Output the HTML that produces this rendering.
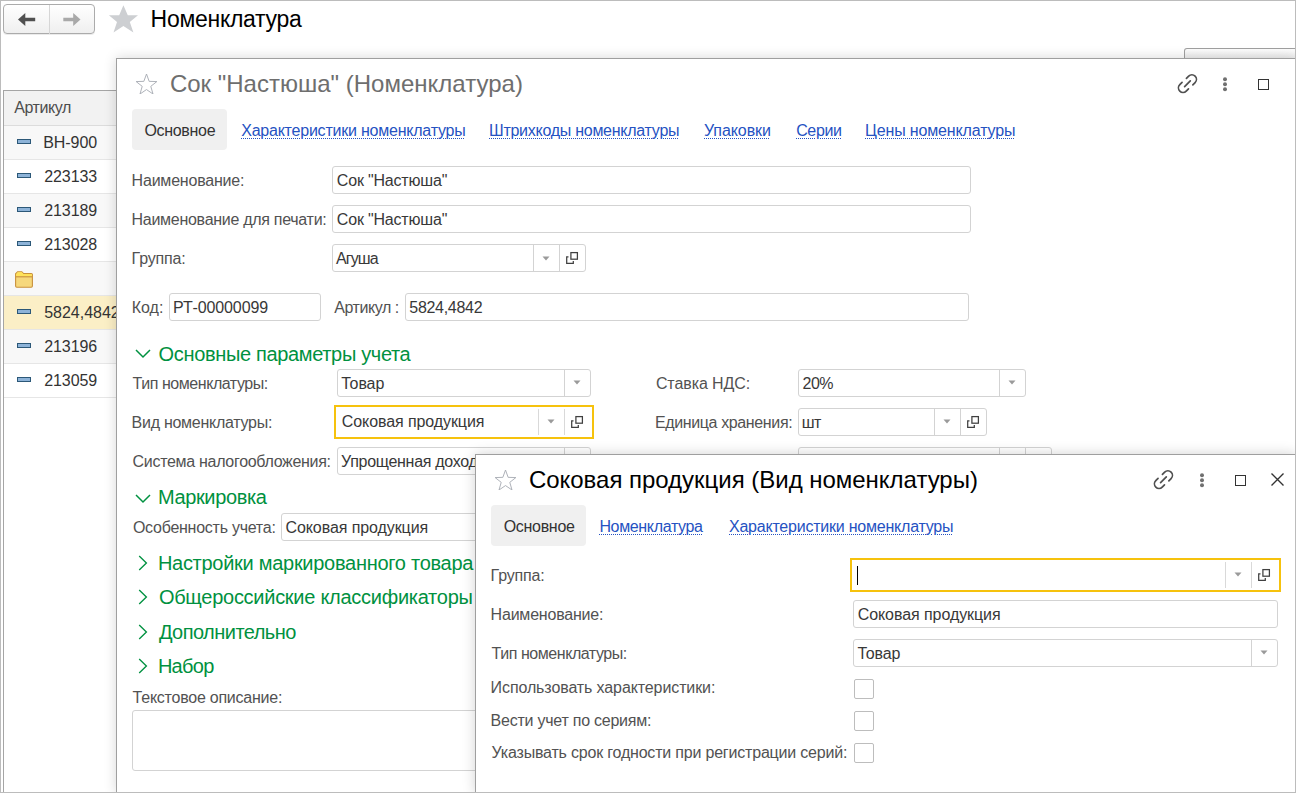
<!DOCTYPE html>
<html><head><meta charset="utf-8"><style>
html,body{margin:0;padding:0;background:#fff;}
body{width:1296px;height:793px;position:relative;overflow:hidden;font-family:"Liberation Sans", sans-serif;}
.lnk{text-decoration:underline dotted;text-decoration-thickness:1px;text-underline-offset:2px;}
</style></head><body>
<div style="position:absolute;left:3px;top:4px;width:92px;height:30px;box-sizing:border-box;border:1px solid #ababab;border-radius:4px;background:linear-gradient(#ffffff,#efefef);box-shadow:0 1px 0 rgba(0,0,0,0.08)"></div>
<div style="position:absolute;left:49px;top:5px;width:1px;height:29px;box-sizing:border-box;background:#d6d6d6"></div>
<svg width="20" height="16" style="position:absolute;left:17px;top:12px" viewBox="0 0 20 16"><path d="M1 7.5L8.3 1V5.8H18.2V9.2H8.3V14Z" fill="#505050"/></svg>
<svg width="20" height="16" style="position:absolute;left:62px;top:12px" viewBox="0 0 20 16"><path d="M18.5 7.5L11.2 1V5.8H1.3V9.2H11.2V14Z" fill="#a9a9a9"/></svg>
<svg width="40" height="35" style="position:absolute;left:104px;top:2px" viewBox="0 0 40 35"><path d="M19.4 3.3L23.8 13.2H34L25.8 20.1L29.4 30.5L19.4 24.1L9.5 30.5L13 20.1L4.9 13.2H15.2Z" fill="#cdcfd2"/></svg>
<div style="position:absolute;white-space:pre;left:150.60px;top:5.00px;font-size:23px;line-height:29px;color:#000;letter-spacing:-0.278px">Номенклатура</div>
<div style="position:absolute;left:3px;top:90px;width:1px;height:703px;box-sizing:border-box;background:#a5a5a5"></div>
<div style="position:absolute;left:3px;top:90px;width:1288px;height:1px;box-sizing:border-box;background:#a5a5a5"></div>
<div style="position:absolute;left:4px;top:91px;width:1287px;height:34px;box-sizing:border-box;background:#f2f2f2"></div>
<div style="position:absolute;left:4px;top:125px;width:1287px;height:1px;box-sizing:border-box;background:#dcdcdc"></div>
<div style="position:absolute;white-space:pre;left:14.30px;top:98.00px;font-size:16px;line-height:20px;color:#4d4d4d;letter-spacing:-0.452px">Артикул</div>
<div style="position:absolute;left:4px;top:126px;width:1287px;height:33px;box-sizing:border-box;background:#f8f8f8"></div>
<div style="position:absolute;left:4px;top:159px;width:1287px;height:1px;box-sizing:border-box;background:#e6e6e6"></div>
<div style="position:absolute;left:17px;top:139px;width:14px;height:5px;box-sizing:border-box;background:#8db3d8;border:1.2px solid #2c5878"></div>
<div style="position:absolute;white-space:pre;left:43.20px;top:133.00px;font-size:16px;line-height:20px;color:#333;letter-spacing:-0.050px">BH-900</div>
<div style="position:absolute;left:4px;top:160px;width:1287px;height:33px;box-sizing:border-box;background:#ffffff"></div>
<div style="position:absolute;left:4px;top:193px;width:1287px;height:1px;box-sizing:border-box;background:#e6e6e6"></div>
<div style="position:absolute;left:17px;top:173px;width:14px;height:5px;box-sizing:border-box;background:#8db3d8;border:1.2px solid #2c5878"></div>
<div style="position:absolute;white-space:pre;left:44.20px;top:167.00px;font-size:16px;line-height:20px;color:#333;letter-spacing:-0.078px">223133</div>
<div style="position:absolute;left:4px;top:194px;width:1287px;height:33px;box-sizing:border-box;background:#f8f8f8"></div>
<div style="position:absolute;left:4px;top:227px;width:1287px;height:1px;box-sizing:border-box;background:#e6e6e6"></div>
<div style="position:absolute;left:17px;top:207px;width:14px;height:5px;box-sizing:border-box;background:#8db3d8;border:1.2px solid #2c5878"></div>
<div style="position:absolute;white-space:pre;left:44.20px;top:201.00px;font-size:16px;line-height:20px;color:#333;letter-spacing:-0.078px">213189</div>
<div style="position:absolute;left:4px;top:228px;width:1287px;height:33px;box-sizing:border-box;background:#ffffff"></div>
<div style="position:absolute;left:4px;top:261px;width:1287px;height:1px;box-sizing:border-box;background:#e6e6e6"></div>
<div style="position:absolute;left:17px;top:241px;width:14px;height:5px;box-sizing:border-box;background:#8db3d8;border:1.2px solid #2c5878"></div>
<div style="position:absolute;white-space:pre;left:44.20px;top:235.00px;font-size:16px;line-height:20px;color:#333;letter-spacing:-0.078px">213028</div>
<div style="position:absolute;left:4px;top:262px;width:1287px;height:33px;box-sizing:border-box;background:#f8f8f8"></div>
<div style="position:absolute;left:4px;top:295px;width:1287px;height:1px;box-sizing:border-box;background:#e6e6e6"></div>
<svg width="19" height="17" style="position:absolute;left:15px;top:271px" viewBox="0 0 19 17"><path d="M0.6 3V15Q0.6 16.2 1.8 16.2H16.2Q17.4 16.2 17.4 15V3.6Q17.4 2.6 16.4 2.6H8.6L6.8 0.7H2.6L0.6 2.8Z" fill="#f6d87c" stroke="#c9913c" stroke-width="1.1"/><path d="M1.1 3.2H8.5L6.9 1.2H2.7Z" fill="#ffe35a"/><rect x="1.1" y="3.1" width="15.8" height="2.3" fill="#ffe35a"/><path d="M0.8 5.8H17.2" stroke="#c9913c" stroke-width="1.1"/></svg>
<div style="position:absolute;left:4px;top:296px;width:1287px;height:33px;box-sizing:border-box;background:#fbefc6"></div>
<div style="position:absolute;left:4px;top:329px;width:1287px;height:1px;box-sizing:border-box;background:#e6e6e6"></div>
<div style="position:absolute;left:17px;top:309px;width:14px;height:5px;box-sizing:border-box;background:#8db3d8;border:1.2px solid #2c5878"></div>
<div style="position:absolute;white-space:pre;left:44.20px;top:303.00px;font-size:16px;line-height:20px;color:#333;letter-spacing:-0.017px">5824,4842</div>
<div style="position:absolute;left:4px;top:330px;width:1287px;height:33px;box-sizing:border-box;background:#f8f8f8"></div>
<div style="position:absolute;left:4px;top:363px;width:1287px;height:1px;box-sizing:border-box;background:#e6e6e6"></div>
<div style="position:absolute;left:17px;top:343px;width:14px;height:5px;box-sizing:border-box;background:#8db3d8;border:1.2px solid #2c5878"></div>
<div style="position:absolute;white-space:pre;left:44.20px;top:337.00px;font-size:16px;line-height:20px;color:#333;letter-spacing:-0.078px">213196</div>
<div style="position:absolute;left:4px;top:364px;width:1287px;height:33px;box-sizing:border-box;background:#ffffff"></div>
<div style="position:absolute;left:4px;top:397px;width:1287px;height:1px;box-sizing:border-box;background:#e6e6e6"></div>
<div style="position:absolute;left:17px;top:377px;width:14px;height:5px;box-sizing:border-box;background:#8db3d8;border:1.2px solid #2c5878"></div>
<div style="position:absolute;white-space:pre;left:44.20px;top:371.00px;font-size:16px;line-height:20px;color:#333;letter-spacing:-0.078px">213059</div>
<div style="position:absolute;left:1184px;top:48px;width:112px;height:11px;box-sizing:border-box;border:1px solid #a0a0a0;border-bottom:none;border-radius:3px 0 0 0;background:linear-gradient(#fdfdfd,#ececec)"></div>
<div style="position:absolute;left:116px;top:58px;width:1180px;height:735px;box-sizing:border-box;border:1px solid #9f9f9f;background:#fff;box-shadow:0 0 12px rgba(0,0,0,0.16)"></div>
<svg width="23" height="20" style="position:absolute;left:135px;top:74px" viewBox="0 0 29 28"><path d="M14.5 0 L18.2 10.3 L29 10.6 L20.5 17.3 L23.6 28 L14.5 21.8 L5.4 28 L8.5 17.3 L0 10.6 L10.8 10.3Z" fill="none" stroke="#a4a9b0" stroke-width="1.25" stroke-linejoin="miter"/></svg>
<div style="position:absolute;white-space:pre;left:169.90px;top:68.60px;font-size:24px;line-height:30px;color:#6e6e6e;letter-spacing:0.004px">Сок &quot;Настюша&quot; (Номенклатура)</div>
<svg width="28" height="28" style="position:absolute;left:1174px;top:70px" viewBox="0 0 28 28"><g fill="none" stroke="#505050" stroke-width="1.6" stroke-linecap="round" transform="translate(13.45 13.6) scale(1.07) translate(-13.45 -13.35)"><path d="M12.5 8.5L14.6 6.4A4.2 4.2 0 0 1 20.6 12.4L18.5 14.5"/><path d="M14.4 18.2L12.3 20.3A4.2 4.2 0 0 1 6.3 14.3L8.4 12.2"/><path d="M10.8 16.1L16.1 10.8"/></g></svg>
<svg width="8" height="16" style="position:absolute;left:1221px;top:77px" viewBox="0 0 8 16"><circle cx="4" cy="2.2" r="2" fill="#707070"/><circle cx="4" cy="7.2" r="2" fill="#707070"/><circle cx="4" cy="12.2" r="2" fill="#707070"/></svg>
<div style="position:absolute;left:1258px;top:79px;width:11px;height:11px;box-sizing:border-box;border:1.3px solid #333"></div>
<div style="position:absolute;left:132px;top:109px;width:95px;height:41px;box-sizing:border-box;background:#f0f0f0;border-radius:4px"></div>
<div style="position:absolute;white-space:pre;left:144.40px;top:121.00px;font-size:16px;line-height:20px;color:#333;letter-spacing:-0.302px">Основное</div>
<div class="lnk" style="position:absolute;white-space:pre;left:241.20px;top:121.00px;font-size:16px;line-height:20px;color:#2552c2;letter-spacing:-0.224px">Характеристики номенклатуры</div>
<div class="lnk" style="position:absolute;white-space:pre;left:489.00px;top:121.00px;font-size:16px;line-height:20px;color:#2552c2;letter-spacing:-0.266px">Штрихкоды номенклатуры</div>
<div class="lnk" style="position:absolute;white-space:pre;left:704.00px;top:121.00px;font-size:16px;line-height:20px;color:#2552c2;letter-spacing:-0.084px">Упаковки</div>
<div class="lnk" style="position:absolute;white-space:pre;left:796.20px;top:121.00px;font-size:16px;line-height:20px;color:#2552c2;letter-spacing:-0.372px">Серии</div>
<div class="lnk" style="position:absolute;white-space:pre;left:865.00px;top:121.00px;font-size:16px;line-height:20px;color:#2552c2;letter-spacing:-0.142px">Цены номенклатуры</div>
<div style="position:absolute;white-space:pre;left:131.60px;top:171.30px;font-size:16px;line-height:20px;color:#525252;letter-spacing:-0.210px">Наименование:</div>
<div style="position:absolute;left:332px;top:166px;width:639px;height:28px;box-sizing:border-box;border:1px solid #d3d3d3;border-radius:3px;background:#fff"></div>
<div style="position:absolute;white-space:pre;left:336.80px;top:171.00px;font-size:16px;line-height:20px;color:#383838;letter-spacing:-0.183px">Сок &quot;Настюша&quot;</div>
<div style="position:absolute;white-space:pre;left:131.60px;top:210.30px;font-size:16px;line-height:20px;color:#525252;letter-spacing:-0.288px">Наименование для печати:</div>
<div style="position:absolute;left:332px;top:205px;width:639px;height:28px;box-sizing:border-box;border:1px solid #d3d3d3;border-radius:3px;background:#fff"></div>
<div style="position:absolute;white-space:pre;left:336.80px;top:210.00px;font-size:16px;line-height:20px;color:#383838;letter-spacing:-0.183px">Сок &quot;Настюша&quot;</div>
<div style="position:absolute;white-space:pre;left:131.60px;top:249.30px;font-size:16px;line-height:20px;color:#525252;letter-spacing:-0.168px">Группа:</div>
<div style="position:absolute;left:332px;top:244px;width:254px;height:28px;box-sizing:border-box;border:1px solid #d3d3d3;border-radius:3px;background:#fff"></div><div style="position:absolute;left:533px;top:245px;width:1px;height:26px;box-sizing:border-box;background:#d3d3d3"></div><div style="position:absolute;left:559px;top:245px;width:1px;height:26px;box-sizing:border-box;background:#d3d3d3"></div>
<div style="position:absolute;white-space:pre;left:336.10px;top:249.00px;font-size:16px;line-height:20px;color:#383838;letter-spacing:-0.911px">Агуша</div>
<svg width="8" height="5" style="position:absolute;left:542px;top:256px" viewBox="0 0 8 5"><path d="M0.5 0.5H7.5L4 4.5Z" fill="#9a9a9a"/></svg>
<svg width="14" height="14" style="position:absolute;left:565px;top:251px" viewBox="0 0 14 14"><rect x="5.9" y="1.6" width="6.5" height="6.6" fill="none" stroke="#404040" stroke-width="1.25"/><path d="M3.5 5.8H1.7V12.3H8.3V10" fill="none" stroke="#404040" stroke-width="1.25"/></svg>
<div style="position:absolute;white-space:pre;left:131.70px;top:297.90px;font-size:16px;line-height:20px;color:#525252;letter-spacing:0.032px">Код:</div>
<div style="position:absolute;left:169px;top:293px;width:152px;height:28px;box-sizing:border-box;border:1px solid #d3d3d3;border-radius:3px;background:#fff"></div>
<div style="position:absolute;white-space:pre;left:173.10px;top:298.00px;font-size:16px;line-height:20px;color:#383838;letter-spacing:-0.124px">РТ-00000099</div>
<div style="position:absolute;white-space:pre;left:334.30px;top:298.00px;font-size:16px;line-height:20px;color:#525252;letter-spacing:-0.449px">Артикул :</div>
<div style="position:absolute;left:405px;top:293px;width:564px;height:28px;box-sizing:border-box;border:1px solid #d3d3d3;border-radius:3px;background:#fff"></div>
<div style="position:absolute;white-space:pre;left:409.30px;top:298.00px;font-size:16px;line-height:20px;color:#383838;letter-spacing:-0.300px">5824,4842</div>
<svg width="16" height="10" style="position:absolute;left:134.5px;top:349px" viewBox="0 0 16 10"><path d="M1 1L8 8L15 1" fill="none" stroke="#009140" stroke-width="1.5"/></svg>
<div style="position:absolute;white-space:pre;left:158.60px;top:341.50px;font-size:20px;line-height:25px;color:#009140;letter-spacing:-0.343px">Основные параметры учета</div>
<div style="position:absolute;white-space:pre;left:132.60px;top:373.80px;font-size:16px;line-height:20px;color:#525252;letter-spacing:-0.448px">Тип номенклатуры:</div>
<div style="position:absolute;left:337px;top:369px;width:254px;height:28px;box-sizing:border-box;border:1px solid #d3d3d3;border-radius:3px;background:#fff"></div><div style="position:absolute;left:564px;top:370px;width:1px;height:26px;box-sizing:border-box;background:#d3d3d3"></div>
<div style="position:absolute;white-space:pre;left:341.20px;top:374.00px;font-size:16px;line-height:20px;color:#383838;letter-spacing:-0.110px">Товар</div>
<svg width="8" height="5" style="position:absolute;left:573px;top:380px" viewBox="0 0 8 5"><path d="M0.5 0.5H7.5L4 4.5Z" fill="#9a9a9a"/></svg>
<div style="position:absolute;white-space:pre;left:655.90px;top:373.90px;font-size:16px;line-height:20px;color:#525252;letter-spacing:-0.084px">Ставка НДС:</div>
<div style="position:absolute;left:798px;top:369px;width:228px;height:28px;box-sizing:border-box;border:1px solid #d3d3d3;border-radius:3px;background:#fff"></div><div style="position:absolute;left:999px;top:370px;width:1px;height:26px;box-sizing:border-box;background:#d3d3d3"></div>
<div style="position:absolute;white-space:pre;left:802.50px;top:374.00px;font-size:16px;line-height:20px;color:#383838;letter-spacing:-0.498px">20%</div>
<svg width="8" height="5" style="position:absolute;left:1008px;top:380px" viewBox="0 0 8 5"><path d="M0.5 0.5H7.5L4 4.5Z" fill="#9a9a9a"/></svg>
<div style="position:absolute;white-space:pre;left:131.60px;top:412.50px;font-size:16px;line-height:20px;color:#525252;letter-spacing:-0.266px">Вид номенклатуры:</div>
<div style="position:absolute;left:334px;top:405px;width:260px;height:34px;box-sizing:border-box;border:2px solid #f6c20d;background:#fff"></div><div style="position:absolute;left:538px;top:409px;width:1px;height:26px;box-sizing:border-box;background:#d9d9d9"></div><div style="position:absolute;left:564px;top:409px;width:1px;height:26px;box-sizing:border-box;background:#d9d9d9"></div>
<div style="position:absolute;white-space:pre;left:341.80px;top:412.30px;font-size:16px;line-height:20px;color:#383838;letter-spacing:-0.088px">Соковая продукция</div>
<svg width="8" height="5" style="position:absolute;left:547px;top:419px" viewBox="0 0 8 5"><path d="M0.5 0.5H7.5L4 4.5Z" fill="#9a9a9a"/></svg>
<svg width="14" height="14" style="position:absolute;left:570px;top:415px" viewBox="0 0 14 14"><rect x="5.9" y="1.6" width="6.5" height="6.6" fill="none" stroke="#404040" stroke-width="1.25"/><path d="M3.5 5.8H1.7V12.3H8.3V10" fill="none" stroke="#404040" stroke-width="1.25"/></svg>
<div style="position:absolute;white-space:pre;left:654.90px;top:412.90px;font-size:16px;line-height:20px;color:#525252;letter-spacing:-0.368px">Единица хранения:</div>
<div style="position:absolute;left:798px;top:408px;width:189px;height:28px;box-sizing:border-box;border:1px solid #d3d3d3;border-radius:3px;background:#fff"></div><div style="position:absolute;left:934px;top:409px;width:1px;height:26px;box-sizing:border-box;background:#d3d3d3"></div><div style="position:absolute;left:960px;top:409px;width:1px;height:26px;box-sizing:border-box;background:#d3d3d3"></div>
<div style="position:absolute;white-space:pre;left:801.80px;top:413.00px;font-size:16px;line-height:20px;color:#383838;letter-spacing:-0.600px">шт</div>
<svg width="8" height="5" style="position:absolute;left:943px;top:419px" viewBox="0 0 8 5"><path d="M0.5 0.5H7.5L4 4.5Z" fill="#9a9a9a"/></svg>
<svg width="14" height="14" style="position:absolute;left:966px;top:415px" viewBox="0 0 14 14"><rect x="5.9" y="1.6" width="6.5" height="6.6" fill="none" stroke="#404040" stroke-width="1.25"/><path d="M3.5 5.8H1.7V12.3H8.3V10" fill="none" stroke="#404040" stroke-width="1.25"/></svg>
<div style="position:absolute;white-space:pre;left:132.60px;top:451.50px;font-size:16px;line-height:20px;color:#525252;letter-spacing:-0.306px">Система налогообложения:</div>
<div style="position:absolute;left:337px;top:447px;width:254px;height:28px;box-sizing:border-box;border:1px solid #d3d3d3;border-radius:3px;background:#fff"></div><div style="position:absolute;left:564px;top:448px;width:1px;height:26px;box-sizing:border-box;background:#d3d3d3"></div>
<div style="position:absolute;white-space:pre;left:341.10px;top:451.80px;font-size:16px;line-height:20px;color:#383838;letter-spacing:-0.300px">Упрощенная доходы</div>
<div style="position:absolute;left:798px;top:447px;width:254px;height:28px;box-sizing:border-box;border:1px solid #d3d3d3;border-radius:3px;background:#fff"></div><div style="position:absolute;left:999px;top:448px;width:1px;height:26px;box-sizing:border-box;background:#d3d3d3"></div><div style="position:absolute;left:1025px;top:448px;width:1px;height:26px;box-sizing:border-box;background:#d3d3d3"></div>
<svg width="16" height="10" style="position:absolute;left:134.5px;top:493.5px" viewBox="0 0 16 10"><path d="M1 1L8 8L15 1" fill="none" stroke="#009140" stroke-width="1.5"/></svg>
<div style="position:absolute;white-space:pre;left:157.90px;top:485.40px;font-size:20px;line-height:25px;color:#009140;letter-spacing:-0.357px">Маркировка</div>
<div style="position:absolute;white-space:pre;left:132.90px;top:517.80px;font-size:16px;line-height:20px;color:#525252;letter-spacing:-0.255px">Особенность учета:</div>
<div style="position:absolute;left:281px;top:513px;width:620px;height:28px;box-sizing:border-box;border:1px solid #d3d3d3;border-radius:3px;background:#fff"></div>
<div style="position:absolute;white-space:pre;left:285.50px;top:518.00px;font-size:16px;line-height:20px;color:#383838;letter-spacing:-0.088px">Соковая продукция</div>
<svg width="10" height="16" style="position:absolute;left:138px;top:555px" viewBox="0 0 10 16"><path d="M1.2 1L8.4 8L1.2 15" fill="none" stroke="#009140" stroke-width="1.35"/></svg>
<div style="position:absolute;white-space:pre;left:157.90px;top:551.30px;font-size:20px;line-height:25px;color:#009140;letter-spacing:-0.279px">Настройки маркированного товара</div>
<svg width="10" height="16" style="position:absolute;left:138px;top:589px" viewBox="0 0 10 16"><path d="M1.2 1L8.4 8L1.2 15" fill="none" stroke="#009140" stroke-width="1.35"/></svg>
<div style="position:absolute;white-space:pre;left:158.90px;top:585.20px;font-size:20px;line-height:25px;color:#009140;letter-spacing:-0.271px">Общероссийские классификаторы</div>
<svg width="10" height="16" style="position:absolute;left:138px;top:624px" viewBox="0 0 10 16"><path d="M1.2 1L8.4 8L1.2 15" fill="none" stroke="#009140" stroke-width="1.35"/></svg>
<div style="position:absolute;white-space:pre;left:158.90px;top:619.60px;font-size:20px;line-height:25px;color:#009140;letter-spacing:-0.544px">Дополнительно</div>
<svg width="10" height="16" style="position:absolute;left:138px;top:658px" viewBox="0 0 10 16"><path d="M1.2 1L8.4 8L1.2 15" fill="none" stroke="#009140" stroke-width="1.35"/></svg>
<div style="position:absolute;white-space:pre;left:157.90px;top:653.70px;font-size:20px;line-height:25px;color:#009140;letter-spacing:-0.711px">Набор</div>
<div style="position:absolute;white-space:pre;left:132.60px;top:688.10px;font-size:16px;line-height:20px;color:#525252;letter-spacing:-0.241px">Текстовое описание:</div>
<div style="position:absolute;left:132px;top:710px;width:769px;height:61px;box-sizing:border-box;border:1px solid #d3d3d3;border-radius:3px;background:#fff"></div>
<div style="position:absolute;left:475px;top:454px;width:821px;height:339px;box-sizing:border-box;border:1px solid #9f9f9f;background:#fff;box-shadow:0 0 12px rgba(0,0,0,0.18)"></div>
<svg width="23" height="20" style="position:absolute;left:494px;top:470px" viewBox="0 0 29 28"><path d="M14.5 0 L18.2 10.3 L29 10.6 L20.5 17.3 L23.6 28 L14.5 21.8 L5.4 28 L8.5 17.3 L0 10.6 L10.8 10.3Z" fill="none" stroke="#a4a9b0" stroke-width="1.25" stroke-linejoin="miter"/></svg>
<div style="position:absolute;white-space:pre;left:528.90px;top:464.70px;font-size:24px;line-height:30px;color:#000;letter-spacing:-0.021px">Соковая продукция (Вид номенклатуры)</div>
<svg width="28" height="28" style="position:absolute;left:1150px;top:466px" viewBox="0 0 28 28"><g fill="none" stroke="#505050" stroke-width="1.6" stroke-linecap="round" transform="translate(13.45 13.6) scale(1.07) translate(-13.45 -13.35)"><path d="M12.5 8.5L14.6 6.4A4.2 4.2 0 0 1 20.6 12.4L18.5 14.5"/><path d="M14.4 18.2L12.3 20.3A4.2 4.2 0 0 1 6.3 14.3L8.4 12.2"/><path d="M10.8 16.1L16.1 10.8"/></g></svg>
<svg width="8" height="16" style="position:absolute;left:1198px;top:473px" viewBox="0 0 8 16"><circle cx="4" cy="2.2" r="2" fill="#707070"/><circle cx="4" cy="7.2" r="2" fill="#707070"/><circle cx="4" cy="12.2" r="2" fill="#707070"/></svg>
<div style="position:absolute;left:1235px;top:475px;width:11px;height:11px;box-sizing:border-box;border:1.3px solid #333"></div>
<svg width="14" height="14" style="position:absolute;left:1271px;top:473px" viewBox="0 0 14 14"><path d="M0.5 0.5L12.5 12.5M12.5 0.5L0.5 12.5" stroke="#333" stroke-width="1.4"/></svg>
<div style="position:absolute;left:491px;top:505px;width:95px;height:41px;box-sizing:border-box;background:#f0f0f0;border-radius:4px"></div>
<div style="position:absolute;white-space:pre;left:503.70px;top:516.70px;font-size:16px;line-height:20px;color:#333;letter-spacing:-0.302px">Основное</div>
<div class="lnk" style="position:absolute;white-space:pre;left:599.40px;top:516.70px;font-size:16px;line-height:20px;color:#2552c2;letter-spacing:-0.343px">Номенклатура</div>
<div class="lnk" style="position:absolute;white-space:pre;left:729.00px;top:516.70px;font-size:16px;line-height:20px;color:#2552c2;letter-spacing:-0.224px">Характеристики номенклатуры</div>
<div style="position:absolute;white-space:pre;left:490.60px;top:565.70px;font-size:16px;line-height:20px;color:#525252;letter-spacing:-0.168px">Группа:</div>
<div style="position:absolute;left:850px;top:558px;width:431px;height:34px;box-sizing:border-box;border:2px solid #f6c20d;background:#fff"></div><div style="position:absolute;left:1225px;top:562px;width:1px;height:26px;box-sizing:border-box;background:#d9d9d9"></div><div style="position:absolute;left:1251px;top:562px;width:1px;height:26px;box-sizing:border-box;background:#d9d9d9"></div>
<div style="position:absolute;left:857px;top:566px;width:1px;height:19px;box-sizing:border-box;background:#000"></div>
<svg width="8" height="5" style="position:absolute;left:1234px;top:572px" viewBox="0 0 8 5"><path d="M0.5 0.5H7.5L4 4.5Z" fill="#9a9a9a"/></svg>
<svg width="14" height="14" style="position:absolute;left:1257px;top:568px" viewBox="0 0 14 14"><rect x="5.9" y="1.6" width="6.5" height="6.6" fill="none" stroke="#404040" stroke-width="1.25"/><path d="M3.5 5.8H1.7V12.3H8.3V10" fill="none" stroke="#404040" stroke-width="1.25"/></svg>
<div style="position:absolute;white-space:pre;left:490.60px;top:604.60px;font-size:16px;line-height:20px;color:#525252;letter-spacing:-0.210px">Наименование:</div>
<div style="position:absolute;left:853px;top:600px;width:425px;height:28px;box-sizing:border-box;border:1px solid #d3d3d3;border-radius:3px;background:#fff"></div>
<div style="position:absolute;white-space:pre;left:857.70px;top:605.00px;font-size:16px;line-height:20px;color:#383838;letter-spacing:-0.069px">Соковая продукция</div>
<div style="position:absolute;white-space:pre;left:491.60px;top:643.50px;font-size:16px;line-height:20px;color:#525252;letter-spacing:-0.448px">Тип номенклатуры:</div>
<div style="position:absolute;left:853px;top:639px;width:425px;height:28px;box-sizing:border-box;border:1px solid #d3d3d3;border-radius:3px;background:#fff"></div><div style="position:absolute;left:1251px;top:640px;width:1px;height:26px;box-sizing:border-box;background:#d3d3d3"></div>
<div style="position:absolute;white-space:pre;left:857.40px;top:644.00px;font-size:16px;line-height:20px;color:#383838;letter-spacing:-0.110px">Товар</div>
<svg width="8" height="5" style="position:absolute;left:1260px;top:650px" viewBox="0 0 8 5"><path d="M0.5 0.5H7.5L4 4.5Z" fill="#9a9a9a"/></svg>
<div style="position:absolute;white-space:pre;left:490.60px;top:678.40px;font-size:16px;line-height:20px;color:#525252;letter-spacing:-0.107px">Использовать характеристики:</div>
<div style="position:absolute;left:854px;top:679px;width:20px;height:20px;box-sizing:border-box;border:1px solid #bdbdbd;border-radius:2px;background:#fff"></div>
<div style="position:absolute;white-space:pre;left:490.60px;top:710.50px;font-size:16px;line-height:20px;color:#525252;letter-spacing:-0.238px">Вести учет по сериям:</div>
<div style="position:absolute;left:854px;top:711px;width:20px;height:20px;box-sizing:border-box;border:1px solid #bdbdbd;border-radius:2px;background:#fff"></div>
<div style="position:absolute;white-space:pre;left:491.60px;top:743.10px;font-size:16px;line-height:20px;color:#525252;letter-spacing:-0.195px">Указывать срок годности при регистрации серий:</div>
<div style="position:absolute;left:854px;top:743px;width:20px;height:20px;box-sizing:border-box;border:1px solid #bdbdbd;border-radius:2px;background:#fff"></div>
<div style="position:absolute;left:0;top:0;width:1296px;height:793px;box-sizing:border-box;border:1px solid #bcbcbc;pointer-events:none"></div>
</body></html>
